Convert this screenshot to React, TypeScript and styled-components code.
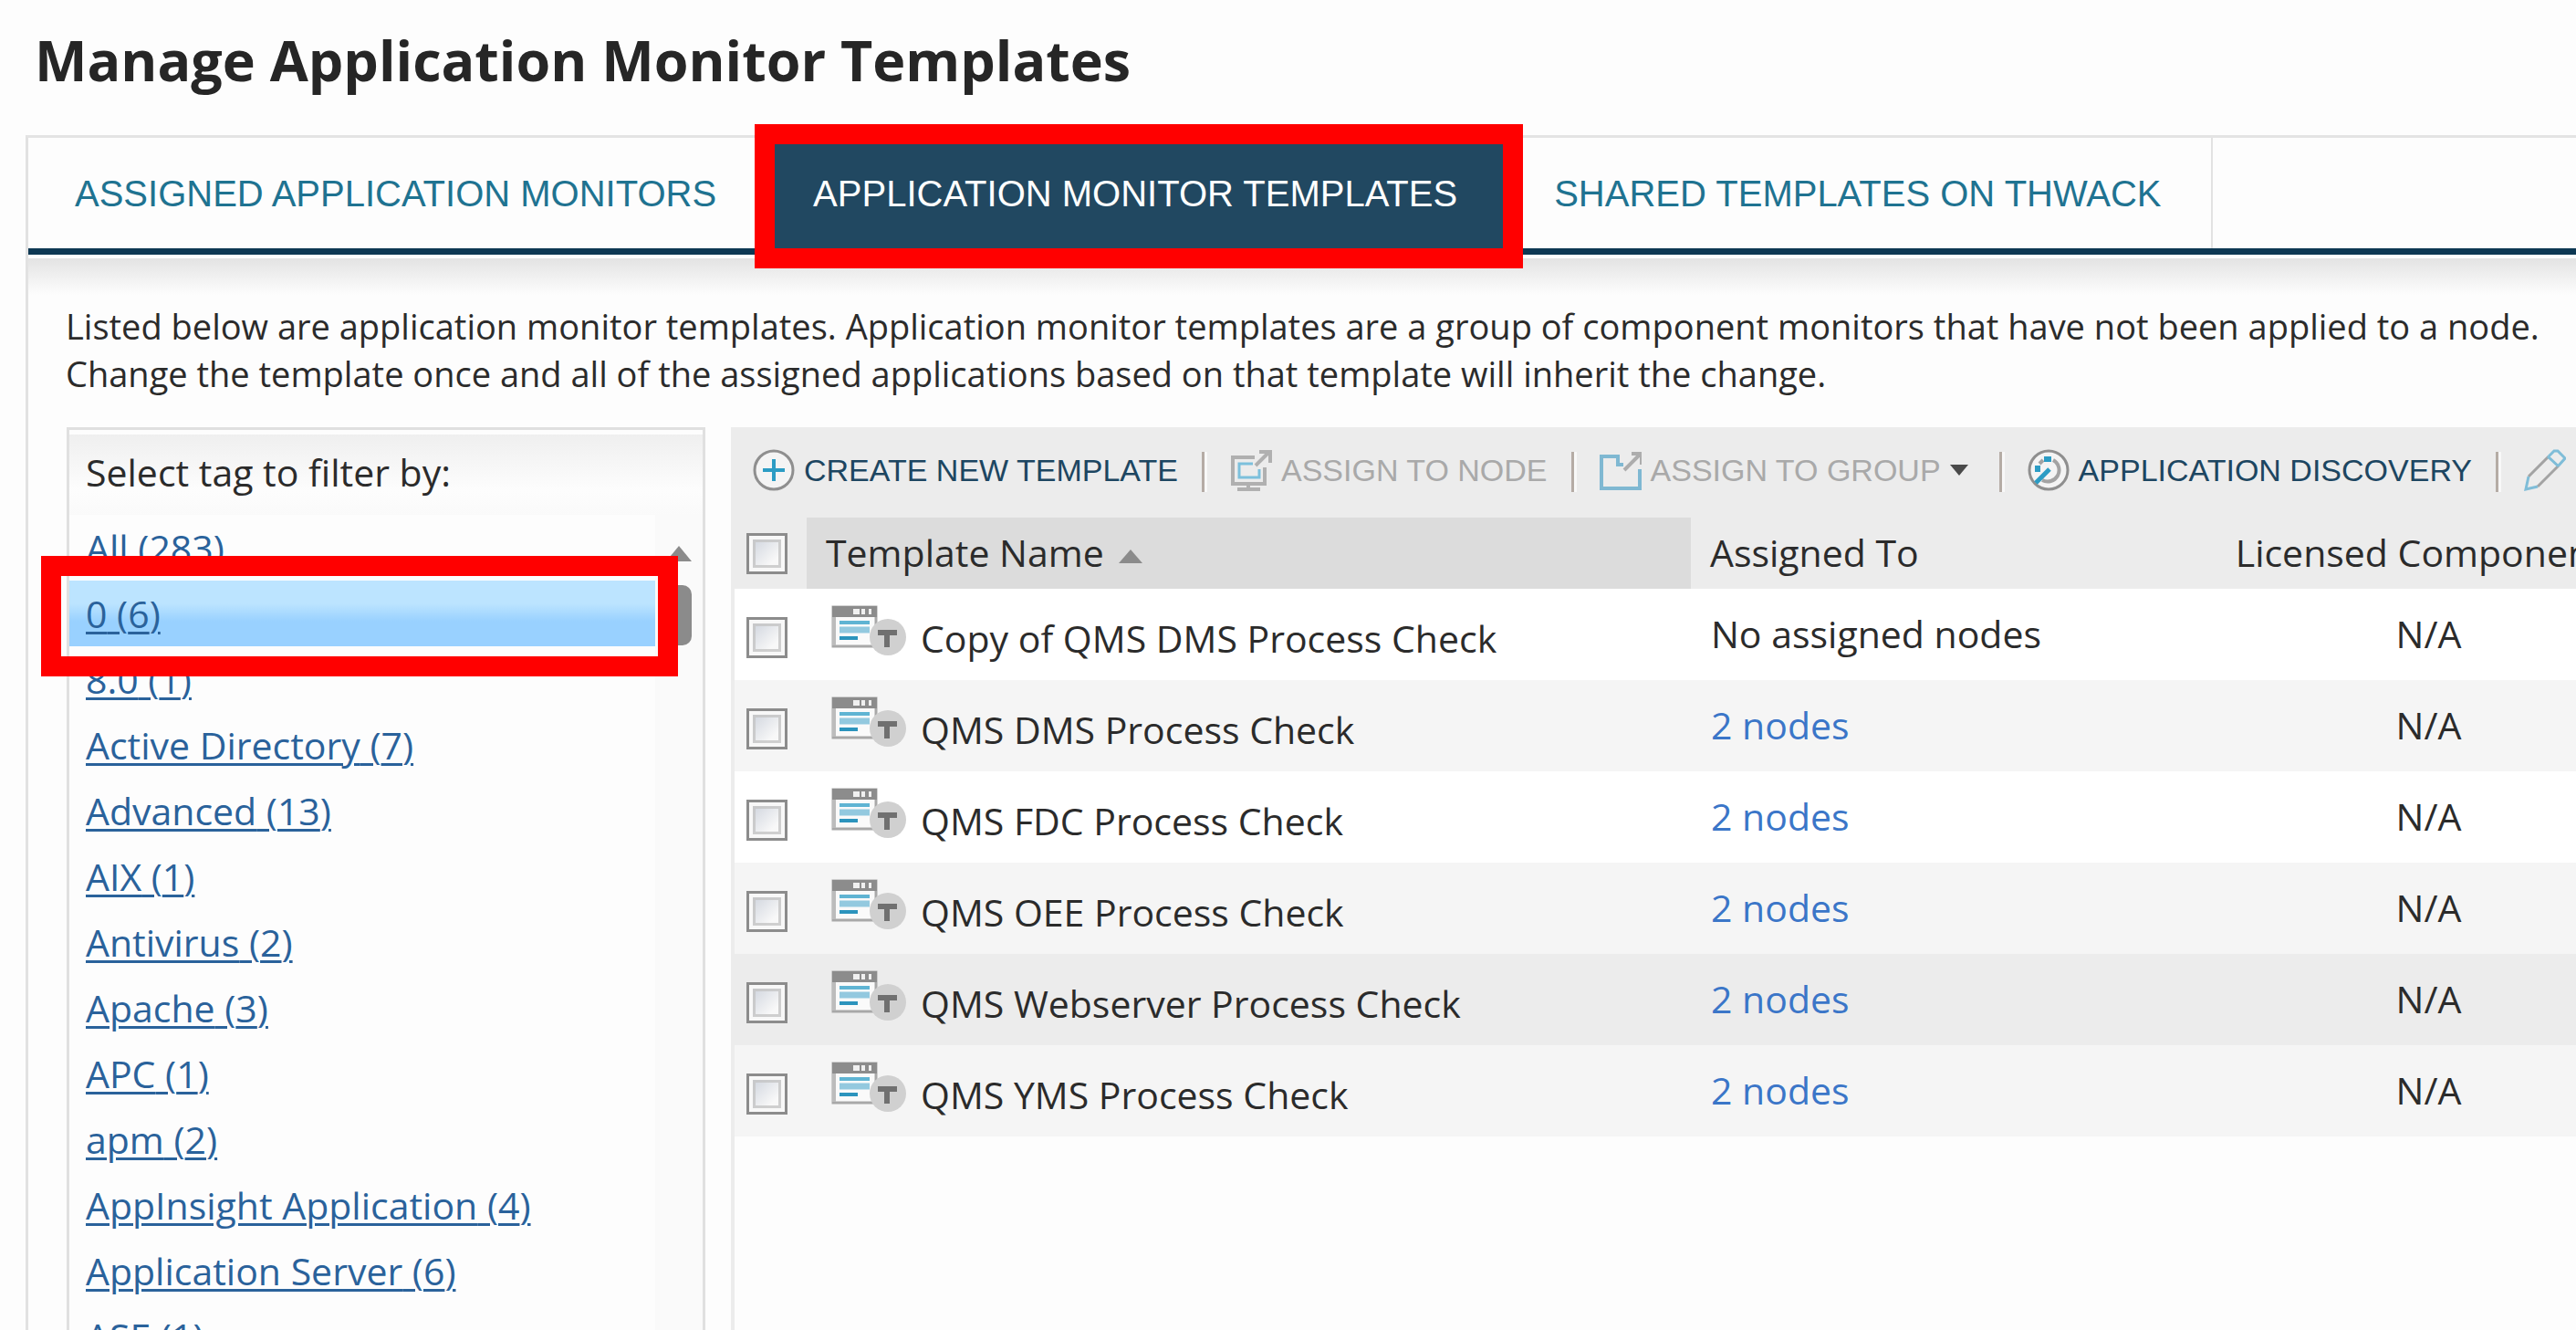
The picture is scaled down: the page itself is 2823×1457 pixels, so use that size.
import React from "react";
import styled, { createGlobalStyle } from "styled-components";

const GlobalStyle = createGlobalStyle`
  * { box-sizing: border-box; }
  body {
    margin: 0;
    background: #fdfdfd;
    color: #2b2b2b;
    font-family: "Open Sans", "Noto Sans", sans-serif;
    font-size: 41px;
    overflow: hidden;
  }
  button { font: inherit; }
`;

const Page = styled.div`
  display: flex;
  flex-direction: column;
  height: 100vh;
  padding-left: 28px;
  overflow: hidden;
`;

const Title = styled.h1`
  margin: 0;
  padding: 24px 10px 0;
  height: 148px;
  font-size: 61px;
  line-height: 84px;
  font-weight: 700;
  color: #262626;
  white-space: nowrap;
`;

const Panel = styled.main`
  flex: 1;
  min-height: 0;
  display: flex;
  flex-direction: column;
  border-left: 3px solid #e2e2e2;
  border-top: 3px solid #e4e4e4;
`;

const Tabs = styled.nav`
  flex: none;
  display: flex;
  height: 128px;
  border-bottom: 7px solid #0d3853;
`;

const Tab = styled.a<{ $active?: boolean }>`
  position: relative;
  display: flex;
  align-items: center;
  padding: 0 55px 0 51px;
  font-family: "Liberation Sans", Arial, sans-serif;
  font-size: 40px;
  line-height: 48px;
  white-space: nowrap;
  text-decoration: none;
  color: ${(p) => (p.$active ? "#ffffff" : "#1f7391")};
  background: ${(p) => (p.$active ? "#214861" : "transparent")};
  &:last-child { border-right: 2px solid #e2e2e2; }
`;

const Callout = styled.span<{ $inset: string }>`
  position: absolute;
  inset: ${(p) => p.$inset};
  border: 22px solid #ff0000;
  z-index: 2;
  pointer-events: none;
`;

const TagCallout = styled(Callout)`
  height: 132px;
`;

const Shade = styled.div`
  flex: none;
  height: 40px;
  margin-top: 4px;
  background: linear-gradient(#e3e3e3, #fdfdfd);
`;

const Description = styled.p`
  flex: none;
  margin: 0;
  padding: 8px 41px 0;
  height: 145px;
  font-size: 38px;
  line-height: 52px;
  white-space: nowrap;
`;

const Body = styled.div`
  flex: 1;
  min-height: 0;
  display: flex;
  gap: 28px;
  padding-left: 42px;
`;

const Sidebar = styled.aside`
  position: relative;
  flex: none;
  width: 700px;
  display: flex;
  flex-direction: column;
  border: 3px solid #e0e0e0;
  border-bottom: 0;
`;

const SidebarTitle = styled.h2`
  flex: none;
  margin: 5px 0 0;
  padding: 13px 18px;
  height: 88px;
  font-size: 41px;
  line-height: 56px;
  font-weight: 400;
  background: linear-gradient(#efefef, #fdfdfd 70%, #fafafa);
`;

const TagArea = styled.div`
  flex: 1;
  min-height: 0;
  display: flex;
`;

const TagList = styled.ul`
  flex: 1;
  margin: 0;
  padding: 0;
  list-style: none;
  overflow: hidden;
`;

const TagItem = styled.li<{ $selected?: boolean }>`
  height: 72px;
  padding: 6px 18px;
  line-height: 60px;
  background: ${(p) =>
    p.$selected ? "linear-gradient(#bce4ff 35%, #99d1ff 62%)" : "none"};
`;

const TagLink = styled.a`
  color: #2a629b;
  text-decoration: underline;
  text-decoration-thickness: 3px;
  text-underline-offset: 4px;
`;

const ScrollTrack = styled.div`
  flex: none;
  width: 52px;
  padding-top: 34px;
  display: flex;
  flex-direction: column;
  align-items: center;
  gap: 26px;
  background: #fafafa;
`;

const ScrollArrow = styled.span`
  border: 14px solid transparent;
  border-top: 0;
  border-bottom: 17px solid #8b8b8b;
`;

const ScrollThumb = styled.span`
  width: 28px;
  height: 66px;
  border-radius: 10px;
  background: #8b8b8b;
`;

const Grid = styled.section`
  flex: 1;
  min-width: 0;
  overflow: hidden;
  border-left: 4px solid #ececec;
`;

const Toolbar = styled.div`
  display: flex;
  align-items: center;
  height: 99px;
  padding: 0 0 6px 20px;
  background: #ececec;
`;

const ToolButton = styled.button`
  flex: none;
  display: flex;
  align-items: center;
  gap: 10px;
  padding: 0;
  border: 0;
  background: none;
  font-family: "Liberation Sans", Arial, sans-serif;
  font-size: 34px;
  line-height: 44px;
  white-space: nowrap;
  color: #1d4661;
  &:disabled { color: #a9a9a9; }
`;

const Divider = styled.span`
  flex: none;
  width: 3px;
  height: 44px;
  margin: 4px 28px 0 26px;
  background: #b5aca5;
  box-shadow: 3px 0 #f8f8f8;
`;

const Icon = styled.svg`
  flex: none;
  width: 46px;
  height: 46px;
  fill: none;
`;

const Table = styled.table`
  width: 100%;
  min-width: 2091px;
  table-layout: fixed;
  border-collapse: collapse;
`;

const HeadCell = styled.th<{ $sorted?: boolean; $center?: boolean }>`
  height: 78px;
  padding: 0 21px 2px;
  font-weight: 400;
  line-height: 56px;
  white-space: nowrap;
  text-align: ${(p) => (p.$center ? "center" : "left")};
  background: ${(p) => (p.$sorted ? "#dcdcdc" : "#ececec")};
`;

const Row = styled.tr<{ $tone: string }>`
  height: 100px;
  background: ${(p) => p.$tone};
`;

const Cell = styled.td<{ $center?: boolean }>`
  padding: 0 22px 2px;
  line-height: 56px;
  white-space: nowrap;
  text-align: ${(p) => (p.$center ? "center" : "left")};
`;

const CheckCell = styled.td`
  padding: 6px 0 0 13px;
`;

const CheckHead = styled.th`
  padding: 0 0 0 13px;
  background: #ececec;
`;

const Check = styled.input`
  appearance: none;
  display: block;
  width: 45px;
  height: 45px;
  margin: 0;
  padding: 4px;
  border: 3px solid #8c8c8c;
  background:
    linear-gradient(135deg, #d0d5de, #f8f8f8 75%) content-box,
    #f8f8f8;
  position: relative;
  &::after {
    content: "";
    position: absolute;
    inset: 4px;
    border: 3px solid #c4c4c4;
    opacity: 0.8;
  }
`;

const NameLine = styled.label`
  display: flex;
  align-items: center;
  gap: 15px;
  padding: 10px 0 0 5px;
`;

const AppIcon = styled.svg`
  flex: none;
  width: 83px;
  height: 56px;
  margin-bottom: 16px;
`;

const SortArrow = styled.span`
  display: inline-block;
  margin-left: 16px;
  vertical-align: 4px;
  border: 13px solid transparent;
  border-top: 0;
  border-bottom: 15px solid #8b8b8b;
`;

const Caret = styled.span`
  margin: 0 8px 0 0;
  border: 10px solid transparent;
  border-bottom: 0;
  border-top: 12px solid #4a4a4a;
`;

const NodeLink = styled.a`
  color: #3b76c8;
  text-decoration: none;
`;

const tags: [string, number][] = [
  ["All", 283],
  ["0", 6],
  ["8.0", 1],
  ["Active Directory", 7],
  ["Advanced", 13],
  ["AIX", 1],
  ["Antivirus", 2],
  ["Apache", 3],
  ["APC", 1],
  ["apm", 2],
  ["AppInsight Application", 4],
  ["Application Server", 6],
  ["ASE", 1],
];

const templates = [
  { name: "Copy of QMS DMS Process Check", nodes: 0, tone: "#ffffff" },
  { name: "QMS DMS Process Check", nodes: 2, tone: "#f5f5f5" },
  { name: "QMS FDC Process Check", nodes: 2, tone: "#ffffff" },
  { name: "QMS OEE Process Check", nodes: 2, tone: "#f5f5f5" },
  { name: "QMS Webserver Process Check", nodes: 2, tone: "#ececec" },
  { name: "QMS YMS Process Check", nodes: 2, tone: "#f5f5f5" },
];

const PlusIcon = () => (
  <Icon viewBox="0 0 46 46">
    <circle cx="23" cy="23" r="21" fill="#f4f4f4" stroke="#8f8f8f" strokeWidth="3" />
    <path d="M23 11v24M11 23h24" stroke="#2c9cc4" strokeWidth="4" />
  </Icon>
);

const NodeIcon = () => (
  <Icon viewBox="0 0 46 46">
    <path d="M27 9H3v29h35V20" stroke="#b0b0b0" strokeWidth="4" />
    <path d="M25 16H10v15h22v-9" stroke="#7cc0dc" strokeWidth="3" />
    <path d="M20 38v6M8 44h25" stroke="#b0b0b0" strokeWidth="4" />
    <path d="M28 18L43 3M32 3h12v12" stroke="#b0b0b0" strokeWidth="4" />
  </Icon>
);

const GroupIcon = () => (
  <Icon viewBox="0 0 46 46">
    <path d="M26 17h-6V8H2v35h42V22" stroke="#7fb8d2" strokeWidth="4" />
    <path d="M27 23L44 6M35 5h11v12" stroke="#adadad" strokeWidth="4" />
  </Icon>
);

const DiscoveryIcon = () => (
  <Icon viewBox="0 0 46 46">
    <circle cx="23" cy="23" r="21" fill="#f4f4f4" stroke="#8f8f8f" strokeWidth="3" />
    <path d="M28 12a12 12 0 1 1-12 22M13 16l4-4" stroke="#a3a3a3" strokeWidth="4" />
    <path d="M9 37L24 22" stroke="#2c9cc4" strokeWidth="5" />
    <path d="M18 11h8M11 18v7" stroke="#2c9cc4" strokeWidth="6" />
  </Icon>
);

const PencilIcon = () => (
  <Icon viewBox="0 0 46 46">
    <path d="M5 30L27 8M15 41L38 18" stroke="#a3a3a3" strokeWidth="3" />
    <path d="M5 30L2 44l13-3M26 8l12 11M27 8l6-6h4l8 8-7 8" stroke="#7fbdd8" strokeWidth="3" />
  </Icon>
);

const TemplateIcon = () => (
  <AppIcon viewBox="0 0 83 56" aria-hidden="true">
    <rect x="2" y="2" width="47" height="43" fill="#fafafa" stroke="#a8a8a8" strokeWidth="3" />
    <rect x="1" y="1" width="49" height="12" fill="#8c8c8c" />
    <path d="M24 7h7M33 7h4M41 7h3" stroke="#f0f0f0" strokeWidth="6" />
    <path d="M3 13v31" stroke="#bcbcbc" strokeWidth="4" />
    <path d="M9 19h33" stroke="#5fb4d3" strokeWidth="4" />
    <path d="M9 27h33" stroke="#93c9df" strokeWidth="7" />
    <path d="M9 36h20" stroke="#2c94bd" strokeWidth="4" />
    <circle cx="62" cy="35" r="20" fill="#d0d0d0" />
    <path d="M51 30h21M61 30v16" stroke="#707070" strokeWidth="6" />
  </AppIcon>
);

export default function App() {
  return (
    <>
      <GlobalStyle />
      <Page>
        <Title>Manage Application Monitor Templates</Title>
        <Panel>
          <Tabs>
            <Tab href="#assigned">ASSIGNED APPLICATION MONITORS</Tab>
            <Tab href="#templates" $active>
              APPLICATION MONITOR TEMPLATES
              <Callout $inset="-15px -17px -22px -13px" />
            </Tab>
            <Tab href="#shared">SHARED TEMPLATES ON THWACK</Tab>
          </Tabs>
          <Shade />
          <Description>
            Listed below are application monitor templates. Application monitor templates are a
            group of component monitors that have not been applied to a node.
            <br />
            Change the template once and all of the assigned applications based on that template
            will inherit the change.
          </Description>
          <Body>
            <Sidebar>
              <SidebarTitle>Select tag to filter by:</SidebarTitle>
              <TagArea>
                <TagList>
                  {tags.map(([name, count]) => (
                    <TagItem key={name} $selected={name === "0"}>
                      <TagLink href="#tag">
                        {name} ({count})
                      </TagLink>
                    </TagItem>
                  ))}
                </TagList>
                <ScrollTrack>
                  <ScrollArrow />
                  <ScrollThumb />
                </ScrollTrack>
              </TagArea>
              <TagCallout $inset="138px 27px auto -31px" />
            </Sidebar>
            <Grid>
              <Toolbar>
                <ToolButton type="button">
                  <PlusIcon />
                  CREATE NEW TEMPLATE
                </ToolButton>
                <Divider />
                <ToolButton type="button" disabled>
                  <NodeIcon />
                  ASSIGN TO NODE
                </ToolButton>
                <Divider />
                <ToolButton type="button" disabled>
                  <GroupIcon />
                  ASSIGN TO GROUP
                  <Caret />
                </ToolButton>
                <Divider />
                <ToolButton type="button">
                  <DiscoveryIcon />
                  APPLICATION DISCOVERY
                </ToolButton>
                <Divider />
                <ToolButton type="button" aria-label="Edit">
                  <PencilIcon />
                </ToolButton>
              </Toolbar>
              <Table>
                <colgroup>
                  <col style={{ width: 79 }} />
                  <col style={{ width: 969 }} />
                  <col style={{ width: 574 }} />
                  <col />
                </colgroup>
                <thead>
                  <tr>
                    <CheckHead>
                      <Check type="checkbox" aria-label="Select all templates" />
                    </CheckHead>
                    <HeadCell $sorted>
                      Template Name
                      <SortArrow />
                    </HeadCell>
                    <HeadCell>Assigned To</HeadCell>
                    <HeadCell $center>Licensed Components</HeadCell>
                  </tr>
                </thead>
                <tbody>
                  {templates.map((t, i) => (
                    <Row key={t.name} $tone={t.tone}>
                      <CheckCell>
                        <Check type="checkbox" id={`template-${i}`} />
                      </CheckCell>
                      <Cell>
                        <NameLine htmlFor={`template-${i}`}>
                          <TemplateIcon />
                          {t.name}
                        </NameLine>
                      </Cell>
                      <Cell>
                        {t.nodes ? (
                          <NodeLink href="#nodes">{t.nodes} nodes</NodeLink>
                        ) : (
                          "No assigned nodes"
                        )}
                      </Cell>
                      <Cell $center>N/A</Cell>
                    </Row>
                  ))}
                </tbody>
              </Table>
            </Grid>
          </Body>
        </Panel>
      </Page>
    </>
  );
}
